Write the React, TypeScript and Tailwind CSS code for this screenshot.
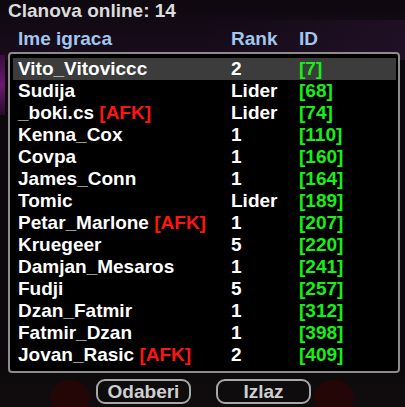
import React from "react";

type Row = { name: string; afk?: boolean; rank: string; id: string };

const rows: Row[] = [
  { name: "Vito_Vitoviccc", rank: "2", id: "7" },
  { name: "Sudija", rank: "Lider", id: "68" },
  { name: "_boki.cs", afk: true, rank: "Lider", id: "74" },
  { name: "Kenna_Cox", rank: "1", id: "110" },
  { name: "Covpa", rank: "1", id: "160" },
  { name: "James_Conn", rank: "1", id: "164" },
  { name: "Tomic", rank: "Lider", id: "189" },
  { name: "Petar_Marlone", afk: true, rank: "1", id: "207" },
  { name: "Kruegeer", rank: "5", id: "220" },
  { name: "Damjan_Mesaros", rank: "1", id: "241" },
  { name: "Fudji", rank: "5", id: "257" },
  { name: "Dzan_Fatmir", rank: "1", id: "312" },
  { name: "Fatmir_Dzan", rank: "1", id: "398" },
  { name: "Jovan_Rasic", afk: true, rank: "2", id: "409" },
];

export default function App() {
  return (
    <div
      className="relative w-[405px] h-[407px] overflow-hidden bg-[#0b090b] font-bold text-[19px] leading-[22px]"
      style={{ fontFamily: '"Liberation Sans", Arial, sans-serif' }}
    >
      {/* background art */}
      <div className="absolute inset-x-0 top-0 h-[60px] bg-gradient-to-b from-[#0e080f] to-[#1a0d1e]" />
      <div className="absolute right-0 top-[20px] w-[200px] h-[40px] bg-gradient-to-r from-transparent to-[#24122a] opacity-70" />
      <div className="absolute left-0 top-[55px] w-[5px] h-[60px] bg-gradient-to-b from-[#3a0c40] via-[#6a1a70] to-[#2a0a2c]" />
      <div className="absolute inset-x-0 bottom-0 h-[40px] bg-gradient-to-b from-[#0c0a0b] to-[#110d0e]" />
      <div className="absolute left-[50px] top-[380px] w-[40px] h-[38px] rounded-full bg-[#240607]" />
      <div className="absolute left-[314px] top-[380px] w-[40px] h-[38px] rounded-full bg-[#240607]" />

      <div className="relative flex flex-col">
        <div className="pl-[8px] text-[#dcdcdc]">Clanova online: 14</div>
        <div className="mt-[6px] flex pl-[18px] text-[#a2c6ee]">
          <span className="w-[213px]">Ime igraca</span>
          <span className="w-[68px]">Rank</span>
          <span>ID</span>
        </div>
        <div className="ml-[8px] mt-[2px] w-[392px] h-[321px] rounded-[4px] border-2 border-[#8c8c8c] bg-black pt-[4px] pl-[3px] pr-[2px]">
          {rows.map((r, i) => (
            <div
              key={r.name}
              className={`flex h-[22px] pl-[5px] ${i === 0 ? "bg-[#3c3c3c]" : ""}`}
            >
              <span className="w-[213px] text-white whitespace-nowrap">
                {r.name}
                {r.afk && <span className="text-[#ff1414]"> [AFK]</span>}
              </span>
              <span className="w-[68px] text-white">{r.rank}</span>
              <span className="text-[#16f016]">[{r.id}]</span>
            </div>
          ))}
        </div>
        <div className="mt-[6px] flex justify-center gap-[25px] pl-[2px]">
          <div className="w-[95px] h-[25px] rounded-[9px] border-2 border-[#a8a8a8] bg-[#0e0c0d] flex items-center justify-center text-[#cfcfcf]">
            Odaberi
          </div>
          <div className="w-[95px] h-[25px] rounded-[9px] border-2 border-[#a8a8a8] bg-[#0e0c0d] flex items-center justify-center text-[#cfcfcf]">
            Izlaz
          </div>
        </div>
      </div>
    </div>
  );
}
